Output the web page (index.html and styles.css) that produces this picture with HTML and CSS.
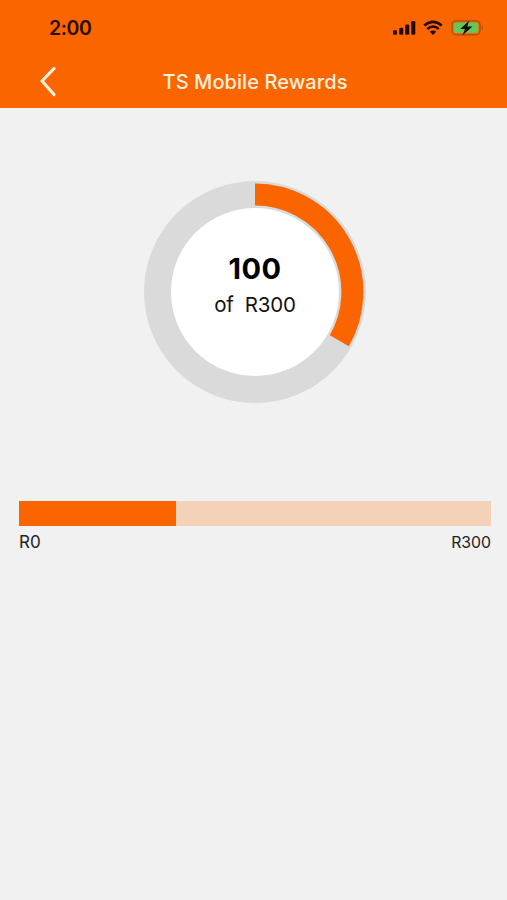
FILE: index.html
```html
<!DOCTYPE html>
<html lang="en">
<head>
<meta charset="utf-8">
<title>TS Mobile Rewards</title>
<link rel="stylesheet" href="styles.css">
</head>
<body>
<header class="header">
  <div class="status">
    <span class="time">2:00</span>
    <svg class="indicators" width="92" height="18" viewBox="0 0 92 18">
      <g fill="#210900">
        <rect x="1" y="11.2" width="4" height="4.5" rx="1.2"/>
        <rect x="7.2" y="8.7" width="4" height="7" rx="1.2"/>
        <rect x="13.2" y="5.5" width="4" height="10.2" rx="1.2"/>
        <rect x="19.3" y="2" width="4" height="13.7" rx="1.2"/>
        <path d="M41 16 L37.8 12.7 Q41 10.1 44.2 12.7Z"/>
      </g>
      <g fill="none" stroke="#210900" stroke-width="2.6">
        <path d="M32.3 6.6 Q41 -.9 49.7 6.6"/>
        <path d="M35.2 9.9 Q41 5.1 46.8 9.9"/>
      </g>
      <rect x="60" y="1.8" width="28" height="14" rx="4" fill="none" stroke="#a94e0d" stroke-width="1.3"/>
      <rect x="61.7" y="3.5" width="24.6" height="10.6" rx="2.4" fill="#65c65a"/>
      <path d="M89.7 6.3 Q92.2 8.8 89.7 11.3Z" fill="#a94e0d"/>
      <path d="M77.3 1.6 L68.3 10 H73 L70.5 16.3 L80.5 7.6 H75.2Z" fill="#160d05"/>
    </svg>
  </div>
  <div class="nav">
    <svg class="back" width="20" height="32" viewBox="0 0 20 32">
      <path d="M16 3.5 L4 16 L16 29.5" fill="none" stroke="#fff3df" stroke-width="3.2" stroke-linecap="round" stroke-linejoin="round"/>
    </svg>
    <h1 class="title">TS Mobile Rewards</h1>
  </div>
</header>
<main class="content">
  <section class="gauge">
    <svg class="ring" width="222" height="222" viewBox="0 0 222 222">
      <circle cx="111" cy="111" r="97.5" fill="#fff" stroke="#dadada" stroke-width="27"/>
      <path d="M111 13.6 A97.4 97.4 0 0 1 195.35 159.7" fill="none" stroke="#fb6500" stroke-width="22"/>
    </svg>
    <div class="reading">
      <strong class="amount">100</strong>
      <span class="goal">of&nbsp; R300</span>
    </div>
  </section>
  <section class="progress">
    <div class="track"><div class="fill"></div></div>
    <div class="scale"><span class="low">R0</span><span class="high">R300</span></div>
  </section>
</main>
</body>
</html>
```
FILE: styles.css
```css
* { box-sizing: border-box; }
body {
  margin: 0;
  min-height: 900px;
  background: #f1f1f1;
  color: #111;
  font-family: Inter, "Liberation Sans", sans-serif;
}
.header {
  height: 108px;
  background: #fb6500;
}
.status {
  display: flex;
  justify-content: space-between;
  align-items: center;
  height: 56px;
  padding: 0 23px 0 49px;
}
.time {
  color: #2b0b00;
  font-size: 19.5px;
  font-weight: 600;
  letter-spacing: -0.4px;
}
.nav {
  display: grid;
  grid-template-columns: 124.5px 1fr 120px;
  align-items: center;
  height: 50px;
  padding-left: 38px;
}
.title {
  margin: 0;
  padding-top: 1px;
  color: #fff0dc;
  font-size: 20px;
  font-weight: 550;
  letter-spacing: 0.08px;
  line-height: 24px;
  white-space: nowrap;
}
.content { padding: 73px 16px 0 19px; }
.gauge {
  display: grid;
  width: 222px;
  height: 222px;
  margin-left: 125px;
}
.ring, .reading { grid-area: 1 / 1; }
.reading {
  display: flex;
  flex-direction: column;
  align-items: center;
  padding-top: 70px;
}
.amount {
  color: #000;
  font-size: 29px;
  font-weight: 700;
  letter-spacing: 0.5px;
  line-height: 36px;
}
.goal {
  font-size: 20.5px;
  letter-spacing: -0.2px;
  line-height: 24px;
  margin-top: 6px;
  white-space: nowrap;
}
.progress { margin-top: 98px; }
.track {
  height: 25px;
  background: #f3d2b9;
}
.fill {
  width: 33.333%;
  height: 100%;
  background: #fb6500;
}
.scale {
  display: flex;
  justify-content: space-between;
  align-items: baseline;
  margin-top: 5px;
  color: #222;
  line-height: 22px;
}
.low { font-size: 17px; }
.high { font-size: 15.8px; }
```
